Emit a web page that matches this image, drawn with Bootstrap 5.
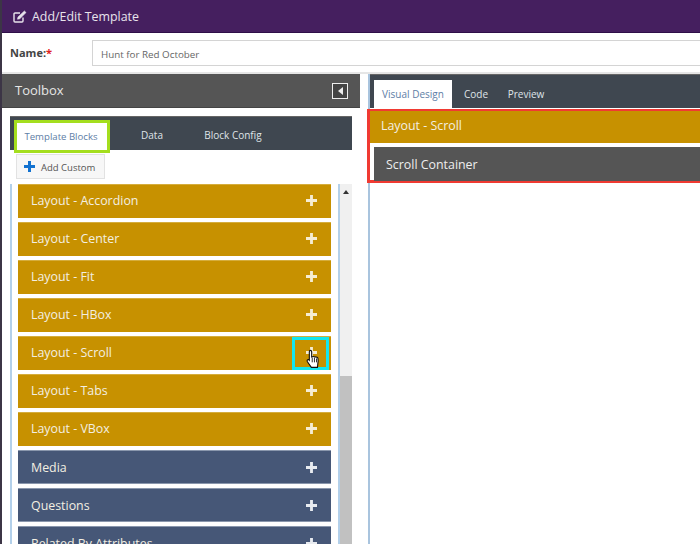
<!DOCTYPE html>
<html lang="en">
<head>
  <meta charset="UTF-8">
  <title>Add/Edit Template</title>
  <link rel="stylesheet" href="https://cdn.jsdelivr.net/npm/bootstrap@5.3.0/dist/css/bootstrap.min.css">
  <style>
    html, body { height: 544px; overflow: hidden; }
    body { font-family: "Open Sans", sans-serif; background: #fff; color: #444; border-left: 2px solid #3c3546; }
    .title-bar { height: 33px; background: #451f5f; border-bottom: 1px solid #2f0f48; color: #e8e4ec; font-size: 12.4px; padding-left: 11px; gap: 5px; }
    .title-bar span { padding-top: 2px; }
    .name-row { height: 41px; border-bottom: 2px solid #e6e6e6; padding-left: 8px; }
    .name-row label { width: 82px; font-size: 11px; font-weight: 700; color: #444; margin: 0; padding-top: 2px; }
    .name-row label i { color: #e02020; font-style: normal; }
    .name-input { height: 26px; flex: 1; border: 1px solid #d4d4d4; border-right: 0; border-radius: 0; font-size: 9.8px; color: #666; padding: 3px 8px 0; margin-top: 1px; }
    .work-area { height: 470px; gap: 8px; }
    .left-pane { width: 358px; flex: none; }
    .right-pane { flex: 1; min-width: 0; border-left: 2px solid #a9c4de; }
    .toolbox-head { height: 34px; background: #555; color: #e6e6e6; font-size: 13px; padding: 0 12px 0 13px; border-bottom: 1px solid #444; }
    .collapse-btn { width: 16px; height: 16px; border: 1px solid #eee; background: #444; }
    .collapse-btn span { width: 0; height: 0; border: 4px solid transparent; border-right: 5px solid #eee; border-left: 0; }
    .left-body { padding: 8px 0 0 8px; }
    .tab-strip { background: #3f4750; border-bottom: 0; flex-wrap: nowrap; }
    .tool-tabs { width: 342px; height: 34px; padding: 3px 0 0 4px; border-top: 1px solid #666; }
    .tab-strip .nav-link { border: 0; border-radius: 0; color: #dfe4e8; font-size: 10px; padding: 0; background: none; }
    .tab-strip .nav-link.active { background: #fff; color: #5e7ea6; }
    .tool-tabs .nav-link { height: 33px; line-height: 30px; text-align: center; }
    .tool-tabs .nav-link.active { width: 96px; border: 3px solid #a4de1e; padding-right: 2px; line-height: 27px; font-size: 9.6px; }
    .tab-data { width: 84px; }
    .tab-config { width: 60px; margin-left: 9px; }
    .add-btn { width: 89px; height: 25px; margin: 4px 0 5px 6px; border: 1px solid #e2e2e2; background: #f7f7f7; border-radius: 0; font-size: 9.5px; color: #555; padding: 0 0 0 7px; gap: 6px; }
    .add-btn span { padding-top: 3px; }
    .block-scroll { width: 342px; height: 360px; overflow: hidden; border-left: 2px solid #b3d0ea; }
    .block-list { width: 326px; padding-left: 6px; gap: 4px; }
    .block-row { width: 313px; height: 34px; flex: none; padding: 0 14px 0 13px; color: #f3efe2; font-size: 12.4px; }
    .block-amber { background: #c79100; border-top: 1px solid #d5ad3d; }
    .block-blue { background: #465777; border-top: 1px solid #8a97ad; border-bottom: 1px solid #8a97ad; padding-top: 2px; }
    .block-row svg { flex: none; margin-bottom: 3px; }
    .block-blue svg { margin-bottom: 1px; }
    .hover-box { position: absolute; left: 274px; top: 0; width: 37px; height: 33px; border: 3px solid #14e6ee; }
    .block-row svg.hand-cursor { position: absolute; left: 288px; top: 12px; margin: 0; }
    .scroll-track { width: 14px; height: 100%; background: #f0f0f0; border-left: 2px solid #b3d0ea; }
    .scroll-arrow { width: 0; height: 0; border: 3px solid transparent; border-bottom: 4px solid #333; border-top: 0; margin: 6px auto 0; }
    .scroll-thumb { margin-top: 182px; height: 178px; background: #c1c1c1; }
    .design-tabs { height: 34px; padding: 5px 0 0 4px; border-top: 1px solid #666; }
    .design-tabs .nav-link { height: 29px; line-height: 29px; font-size: 10px; }
    .design-tabs .nav-link.active { width: 78px; text-align: center; }
    .tab-code { width: 48px; text-align: center; }
    .tab-preview { width: 52px; text-align: center; }
    .drop-zone { height: 74px; margin: 1px 0 0 -3px; border: 3px solid #f03a32; border-right: 0; border-top-width: 2px; }
    .zone-amber { height: 32px; background: #c79100; color: #f3efe2; font-size: 12.4px; padding: 0 0 1px 11px; }
    .zone-grey { height: 34px; margin: 4px 0 0 4px; background: #555; color: #eee; font-size: 12.4px; padding: 2px 0 0 12px; }
  </style>
</head>
<body>
  <div class="title-bar d-flex align-items-center">
    <svg width="14" height="13" viewBox="0 0 14 13" fill="none" stroke="#e8e4ec" stroke-width="1.4"><path d="M10 7.5V11a1 1 0 0 1-1 1H2a1 1 0 0 1-1-1V4a1 1 0 0 1 1-1h5"/><path d="M5 7l-.5 2.2L6.800 8.800 13 2.600 11.400 1z" fill="#e8e4ec" stroke-width=".6"/></svg>
    <span>Add/Edit Template</span>
  </div>
  <div class="name-row d-flex align-items-center">
    <label for="tplName">Name:<i>*</i></label>
    <input id="tplName" class="form-control name-input" value="Hunt for Red October">
  </div>

  <div class="work-area d-flex">
    <div class="left-pane">
      <div class="toolbox-head d-flex align-items-center justify-content-between">
        <span>Toolbox</span>
        <div class="collapse-btn d-flex align-items-center justify-content-center"><span></span></div>
      </div>
      <div class="left-body">
        <ul class="nav tab-strip tool-tabs">
          <li class="nav-item"><a class="nav-link active" href="#">Template Blocks</a></li>
          <li class="nav-item"><a class="nav-link tab-data" href="#">Data</a></li>
          <li class="nav-item"><a class="nav-link tab-config" href="#">Block Config</a></li>
        </ul>
        <button class="btn add-btn d-flex align-items-center">
          <svg width="11" height="11" viewBox="0 0 11 11" fill="#1272d0"><path d="M4 0h3v4h4v3H7v4H4V7H0V4h4z"/></svg>
          <span>Add Custom</span>
        </button>
        <div class="block-scroll d-flex">
          <div class="block-list d-flex flex-column">
            <div class="block-row block-amber d-flex align-items-center justify-content-between"><span>Layout - Accordion</span><svg width="11" height="11" viewBox="0 0 10 10" fill="#f5ecd2"><path d="M3.700 0h2.600v3.700H10v2.600H6.300V10H3.700V6.300H0V3.700h3.700z"/></svg></div>
            <div class="block-row block-amber d-flex align-items-center justify-content-between"><span>Layout - Center</span><svg width="11" height="11" viewBox="0 0 10 10" fill="#f5ecd2"><path d="M3.700 0h2.600v3.700H10v2.600H6.300V10H3.700V6.300H0V3.700h3.700z"/></svg></div>
            <div class="block-row block-amber d-flex align-items-center justify-content-between"><span>Layout - Fit</span><svg width="11" height="11" viewBox="0 0 10 10" fill="#f5ecd2"><path d="M3.700 0h2.600v3.700H10v2.600H6.300V10H3.700V6.300H0V3.700h3.700z"/></svg></div>
            <div class="block-row block-amber d-flex align-items-center justify-content-between"><span>Layout - HBox</span><svg width="11" height="11" viewBox="0 0 10 10" fill="#f5ecd2"><path d="M3.700 0h2.600v3.700H10v2.600H6.300V10H3.700V6.300H0V3.700h3.700z"/></svg></div>
            <div class="block-row block-amber d-flex align-items-center justify-content-between position-relative"><span>Layout - Scroll</span><svg width="11" height="11" viewBox="0 0 10 10" fill="#f5ecd2"><path d="M3.700 0h2.600v3.700H10v2.600H6.300V10H3.700V6.300H0V3.700h3.700z"/></svg>
              <div class="hover-box"></div>
              <svg class="hand-cursor" width="14" height="20" viewBox="0 0 12 18"><path d="M3.500 1.200c.9 0 1.300.6 1.300 1.400v4.600l.6-.1c.6-.5 1.300-.4 1.700.1.600-.4 1.300-.3 1.600.2.600-.3 1.500 0 1.700.8.300 1.400.3 3 0 4.500L10 16.500H4.500L1 11.500c-.5-.8-.3-1.500.2-1.800.5-.3 1.100-.2 1.500.3V2.600c0-.8.200-1.400.8-1.400z" fill="#fff" stroke="#111" stroke-width="1"/><path d="M5.300 8v4M7.300 8v4M9.200 8.500V12" stroke="#111" stroke-width=".8"/></svg>
            </div>
            <div class="block-row block-amber d-flex align-items-center justify-content-between"><span>Layout - Tabs</span><svg width="11" height="11" viewBox="0 0 10 10" fill="#f5ecd2"><path d="M3.700 0h2.600v3.700H10v2.600H6.300V10H3.700V6.300H0V3.700h3.700z"/></svg></div>
            <div class="block-row block-amber d-flex align-items-center justify-content-between"><span>Layout - VBox</span><svg width="11" height="11" viewBox="0 0 10 10" fill="#f5ecd2"><path d="M3.700 0h2.600v3.700H10v2.600H6.300V10H3.700V6.300H0V3.700h3.700z"/></svg></div>
            <div class="block-row block-blue d-flex align-items-center justify-content-between"><span>Media</span><svg width="11" height="11" viewBox="0 0 10 10" fill="#e8ebf0"><path d="M3.700 0h2.600v3.700H10v2.600H6.300V10H3.700V6.300H0V3.700h3.700z"/></svg></div>
            <div class="block-row block-blue d-flex align-items-center justify-content-between"><span>Questions</span><svg width="11" height="11" viewBox="0 0 10 10" fill="#e8ebf0"><path d="M3.700 0h2.600v3.700H10v2.600H6.300V10H3.700V6.300H0V3.700h3.700z"/></svg></div>
            <div class="block-row block-blue d-flex align-items-center justify-content-between"><span>Related By Attributes</span><svg width="11" height="11" viewBox="0 0 10 10" fill="#e8ebf0"><path d="M3.700 0h2.600v3.700H10v2.600H6.300V10H3.700V6.300H0V3.700h3.700z"/></svg></div>
          </div>
          <div class="scroll-track">
            <div class="scroll-arrow"></div>
            <div class="scroll-thumb"></div>
          </div>
        </div>
      </div>
    </div>

    <div class="right-pane">
      <ul class="nav tab-strip design-tabs">
        <li class="nav-item"><a class="nav-link active" href="#">Visual Design</a></li>
        <li class="nav-item"><a class="nav-link tab-code" href="#">Code</a></li>
        <li class="nav-item"><a class="nav-link tab-preview" href="#">Preview</a></li>
      </ul>
      <div class="drop-zone">
        <div class="zone-amber d-flex align-items-center">Layout - Scroll</div>
        <div class="zone-grey d-flex align-items-center">Scroll Container</div>
      </div>
    </div>
  </div>
  <script src="https://cdn.jsdelivr.net/npm/bootstrap@5.3.0/dist/js/bootstrap.bundle.min.js"></script>
</body>
</html>
